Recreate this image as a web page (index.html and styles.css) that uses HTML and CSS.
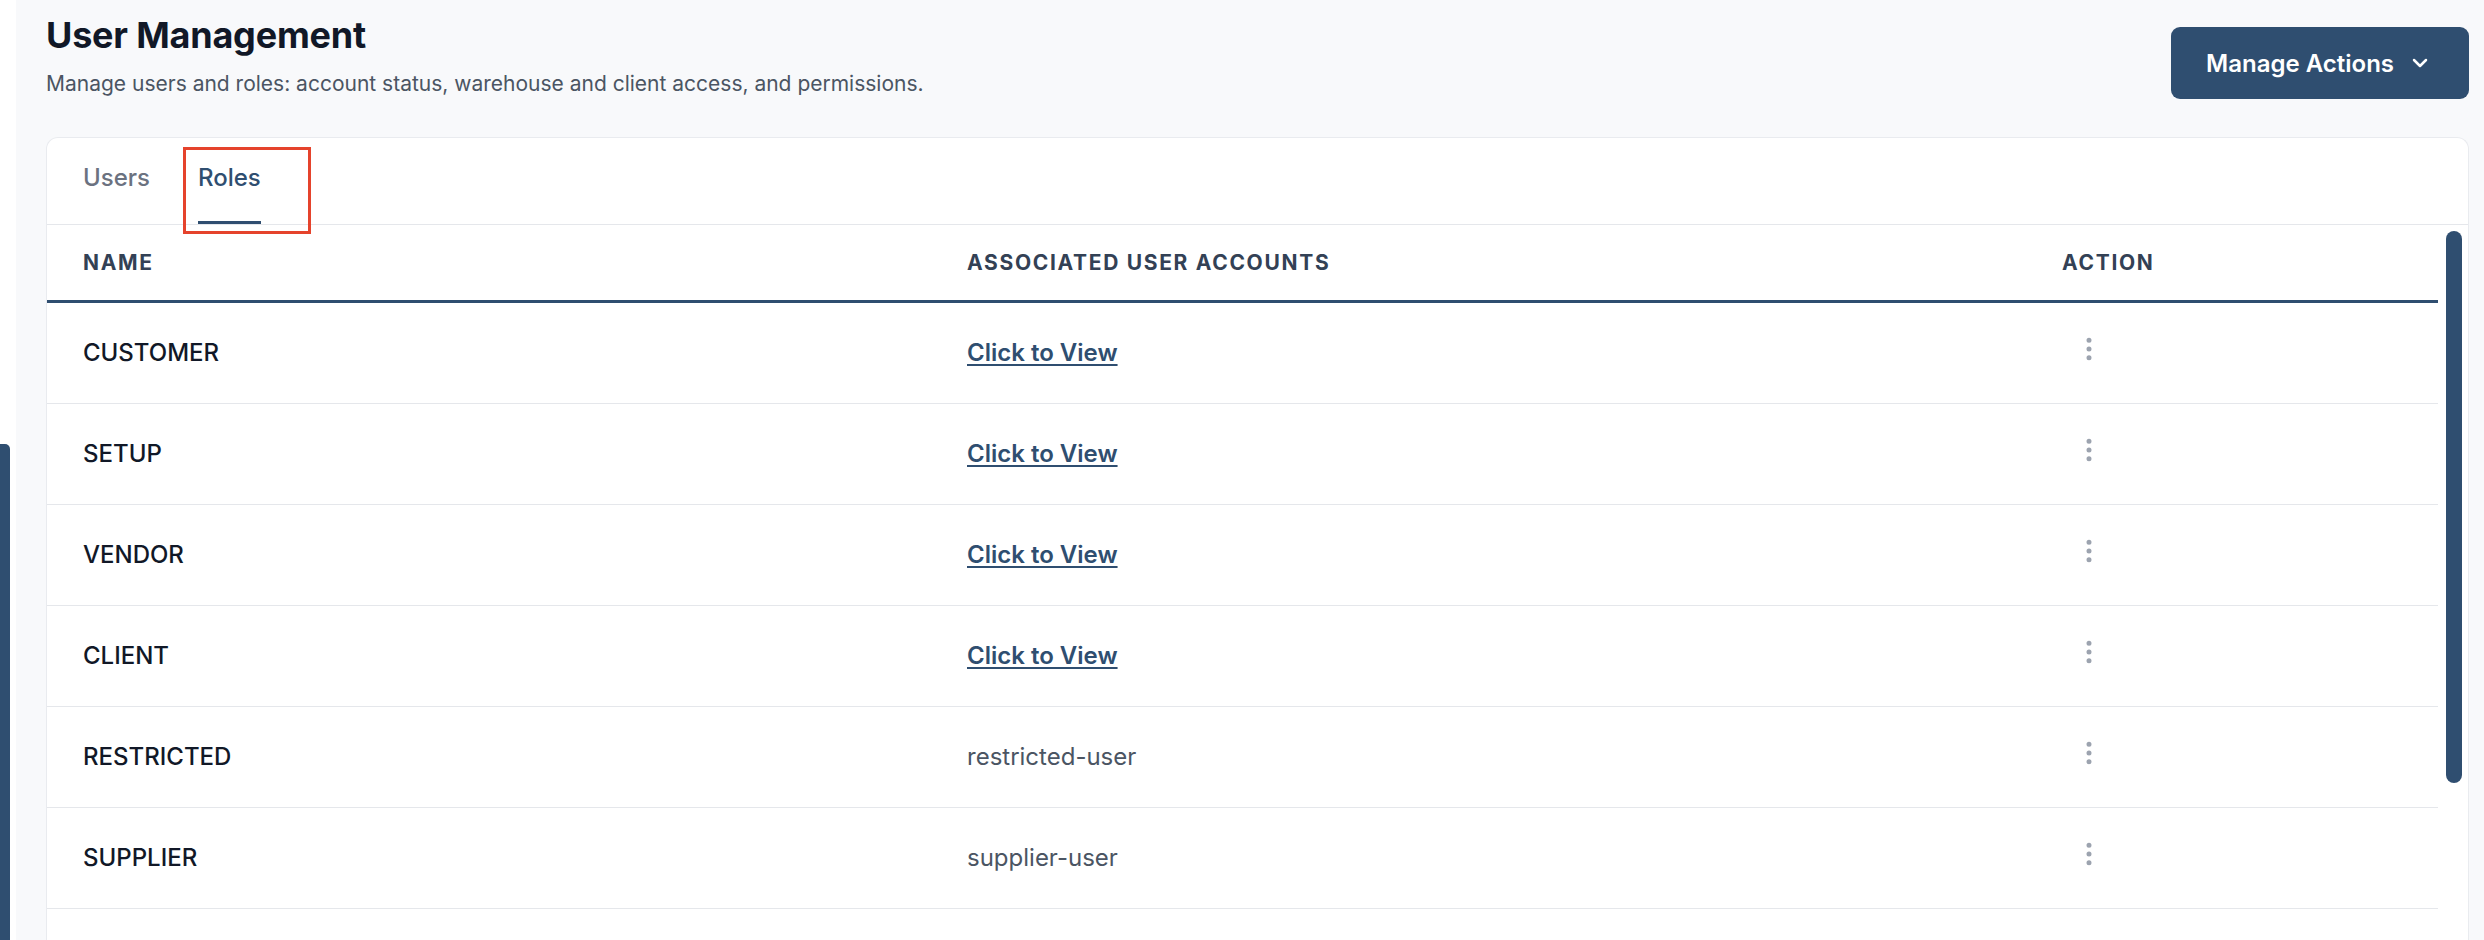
FILE: index.html
```html
<!DOCTYPE html>
<html lang="en">
<head>
<meta charset="utf-8">
<title>User Management</title>
<link rel="stylesheet" href="styles.css">
</head>
<body>
<div class="app">
  <aside class="rail"><div class="rail-thumb"></div></aside>
  <main class="main">
    <header class="page-head">
      <div class="page-title">
        <h1>User Management</h1>
        <p>Manage users and roles: account status, warehouse and client access, and permissions.</p>
      </div>
      <button class="btn-primary" type="button">
        <span>Manage Actions</span>
        <svg class="chev" viewBox="0 0 24 24" width="24" height="24" fill="none" stroke="currentColor" stroke-width="2.5" stroke-linecap="round" stroke-linejoin="round"><path d="m6 9 6 6 6-6"/></svg>
      </button>
    </header>

    <section class="card">
      <nav class="tabs">
        <a class="tab">Users</a>
        <a class="tab tab-active">Roles<span class="annot"></span></a>
      </nav>
      <div class="card-body">
        <table class="roles">
          <colgroup>
            <col class="c-name">
            <col class="c-acc">
            <col class="c-act">
          </colgroup>
          <thead>
            <tr>
              <th>NAME</th>
              <th>ASSOCIATED USER ACCOUNTS</th>
              <th>ACTION</th>
            </tr>
          </thead>
          <tbody>
            <tr>
              <td class="name">CUSTOMER</td>
              <td><a class="view">Click to View</a></td>
              <td><button class="dots" type="button"><svg viewBox="0 0 24 24" width="30" height="30" fill="none" stroke="currentColor" stroke-width="2" stroke-linecap="round"><circle cx="12" cy="5" r="1"/><circle cx="12" cy="12" r="1"/><circle cx="12" cy="19" r="1"/></svg></button></td>
            </tr>
            <tr>
              <td class="name">SETUP</td>
              <td><a class="view">Click to View</a></td>
              <td><button class="dots" type="button"><svg viewBox="0 0 24 24" width="30" height="30" fill="none" stroke="currentColor" stroke-width="2" stroke-linecap="round"><circle cx="12" cy="5" r="1"/><circle cx="12" cy="12" r="1"/><circle cx="12" cy="19" r="1"/></svg></button></td>
            </tr>
            <tr>
              <td class="name">VENDOR</td>
              <td><a class="view">Click to View</a></td>
              <td><button class="dots" type="button"><svg viewBox="0 0 24 24" width="30" height="30" fill="none" stroke="currentColor" stroke-width="2" stroke-linecap="round"><circle cx="12" cy="5" r="1"/><circle cx="12" cy="12" r="1"/><circle cx="12" cy="19" r="1"/></svg></button></td>
            </tr>
            <tr>
              <td class="name">CLIENT</td>
              <td><a class="view">Click to View</a></td>
              <td><button class="dots" type="button"><svg viewBox="0 0 24 24" width="30" height="30" fill="none" stroke="currentColor" stroke-width="2" stroke-linecap="round"><circle cx="12" cy="5" r="1"/><circle cx="12" cy="12" r="1"/><circle cx="12" cy="19" r="1"/></svg></button></td>
            </tr>
            <tr>
              <td class="name">RESTRICTED</td>
              <td class="user">restricted-user</td>
              <td><button class="dots" type="button"><svg viewBox="0 0 24 24" width="30" height="30" fill="none" stroke="currentColor" stroke-width="2" stroke-linecap="round"><circle cx="12" cy="5" r="1"/><circle cx="12" cy="12" r="1"/><circle cx="12" cy="19" r="1"/></svg></button></td>
            </tr>
            <tr>
              <td class="name">SUPPLIER</td>
              <td class="user">supplier-user</td>
              <td><button class="dots" type="button"><svg viewBox="0 0 24 24" width="30" height="30" fill="none" stroke="currentColor" stroke-width="2" stroke-linecap="round"><circle cx="12" cy="5" r="1"/><circle cx="12" cy="12" r="1"/><circle cx="12" cy="19" r="1"/></svg></button></td>
            </tr>
          </tbody>
        </table>
        <div class="vscroll"><div class="vscroll-thumb"></div></div>
      </div>
    </section>
  </main>
</div>
</body>
</html>
```

FILE: styles.css
```css
html, body {
  margin: 0;
  padding: 0;
  height: 100%;
  overflow: hidden;
}

body {
  font-family: Inter, "Noto Sans", "Liberation Sans", sans-serif;
  color: #111827;
  background: #f8f9fb;
}

.app {
  display: flex;
  height: 940px;
  overflow: hidden;
}

.rail {
  flex: none;
  width: 16px;
  background: #ffffff;
}

.rail-thumb {
  width: 10px;
  margin-top: 444px;
  height: 520px;
  background: #2f4e70;
  border-top-right-radius: 5px;
}

.main {
  flex: 1;
  min-width: 0;
  padding: 11px 15px 0 30px;
  background: #f8f9fb;
}

.page-head {
  display: flex;
  justify-content: space-between;
  align-items: flex-start;
}

.page-title h1 {
  margin: 0;
  font-size: 36px;
  line-height: 48px;
  font-weight: 700;
  color: #111827;
  letter-spacing: -0.2px;
}

.page-title p {
  margin: 10px 0 0;
  font-size: 21px;
  line-height: 30px;
  color: #4b5563;
}

.btn-primary {
  margin-top: 16px;
  height: 72px;
  display: inline-flex;
  align-items: center;
  gap: 14px;
  padding: 0 37px 0 35px;
  border: 0;
  border-radius: 9px;
  background: #2f4e70;
  color: #ffffff;
  font-family: inherit;
  font-size: 24px;
  font-weight: 600;
}

.chev {
  display: block;
}

.card {
  margin-top: 38px;
  background: #ffffff;
  border: 1px solid #e9ebef;
  border-bottom: 0;
  border-radius: 12px 12px 0 0;
  height: 900px;
}

.tabs {
  display: flex;
  gap: 48px;
  padding: 0 36px;
  border-bottom: 1px solid #e5e7eb;
}

.tab {
  position: relative;
  padding: 22px 0 25px;
  font-size: 24px;
  line-height: 36px;
  font-weight: 500;
  color: #6b7280;
  border-bottom: 3px solid transparent;
}

.tab-active {
  color: #2f4e70;
  border-bottom-color: #2f4e70;
}

.annot {
  position: absolute;
  left: -15px;
  right: -50px;
  top: 9px;
  bottom: -13px;
  border: 3px solid #e5432c;
}

.card-body {
  display: flex;
}

.roles {
  flex: 1;
  border-collapse: collapse;
  table-layout: fixed;
}

.c-name { width: 884px; }
.c-acc { width: 1095px; }

.roles th {
  height: 75px;
  padding: 0 36px;
  text-align: left;
  vertical-align: middle;
  font-size: 21px;
  font-weight: 700;
  letter-spacing: 0.08em;
  color: #334155;
  border-bottom: 3px solid #2f4e70;
}

.roles td {
  height: 100px;
  padding: 0 36px;
  vertical-align: middle;
  font-size: 24px;
  line-height: 36px;
  border-bottom: 1px solid #e5e7eb;
}

.roles td.name {
  font-weight: 500;
  color: #111827;
}

.roles td.user {
  color: #4b5563;
}

.view {
  font-weight: 600;
  color: #2f4e70;
  text-decoration: underline;
  text-decoration-thickness: 2px;
  text-underline-offset: 3px;
}

.dots {
  display: block;
  margin-left: 12px;
  padding: 0 0 9px;
  border: 0;
  background: none;
  color: #9ca3af;
}

.dots svg {
  display: block;
}

.vscroll {
  flex: none;
  width: 30px;
}

.vscroll-thumb {
  margin: 6px 6px 0 8px;
  height: 552px;
  border-radius: 8px;
  background: #2f4e70;
}
```
